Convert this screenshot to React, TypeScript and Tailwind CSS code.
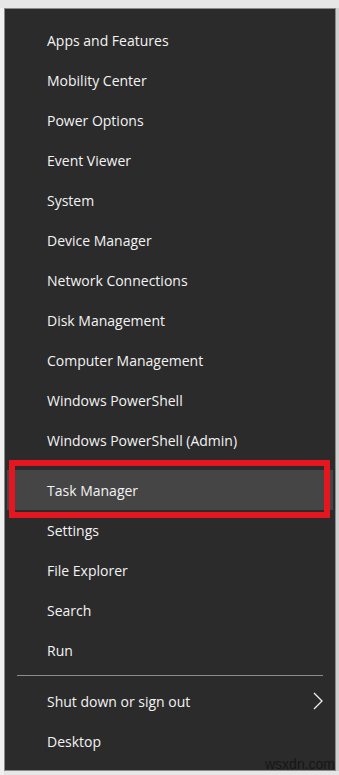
import React from "react";

const groups: string[][] = [
  [
    "Apps and Features",
    "Mobility Center",
    "Power Options",
    "Event Viewer",
    "System",
    "Device Manager",
    "Network Connections",
    "Disk Management",
    "Computer Management",
    "Windows PowerShell",
    "Windows PowerShell (Admin)",
  ],
  ["Task Manager", "Settings", "File Explorer", "Search", "Run"],
  ["Shut down or sign out", "Desktop"],
];

function Chevron() {
  return (
    <svg width="10" height="18" viewBox="0 0 10 18" className="ml-auto mr-[12px]">
      <polyline points="1,1 9,9 1,17" fill="none" stroke="#f0f0f0" strokeWidth="1.3" />
    </svg>
  );
}

function Item({ label, active, submenu }: { label: string; active?: boolean; submenu?: boolean }) {
  return (
    <div
      className={`relative h-[40px] flex items-center text-[14px] text-[#f3f3f3] ${
        active ? "bg-[#454545] mx-[2px] pl-[40px]" : "pl-[42px]"
      }`}
    >
      <span>{label}</span>
      {submenu && <Chevron />}
      {active && (
        <div className="absolute left-[2px] right-[3px] top-[-10px] bottom-[-8px] border-[6px] border-[#e5161f]" />
      )}
    </div>
  );
}

export default function App() {
  return (
    <div
      className="relative w-[339px] h-[775px] bg-[#e6e6e6] pt-[8px] flex items-start overflow-hidden"
      style={{ fontFamily: '"Open Sans", "Noto Sans", sans-serif' }}
    >
      <div className="w-[4px] self-stretch bg-[#f0f0f0]" />
      <div className="w-[332px] border border-[#8a8a8a] bg-[#2b2b2b] pt-[11px] pb-[9px]">
        {groups.map((g, gi) => (
          <div key={gi}>
            {gi > 0 && (
              <div className={`flex items-center px-[12px] ${gi === 1 ? "h-[10px]" : "h-[11px]"}`}>
                <div className="h-px w-full bg-[#8c8c8c]" />
              </div>
            )}
            {g.map((label) => (
              <Item
                key={label}
                label={label}
                active={label === "Task Manager"}
                submenu={label === "Shut down or sign out"}
              />
            ))}
          </div>
        ))}
      </div>
      <div className="w-[3px] h-[763px] bg-[#cfcfcf]" />
      <span
        className="absolute left-[265px] top-[754px] text-[14px] text-[#161616]"
        style={{ fontFamily: '"Liberation Sans", sans-serif' }}
      >
        wsxdn.com
      </span>
    </div>
  );
}
